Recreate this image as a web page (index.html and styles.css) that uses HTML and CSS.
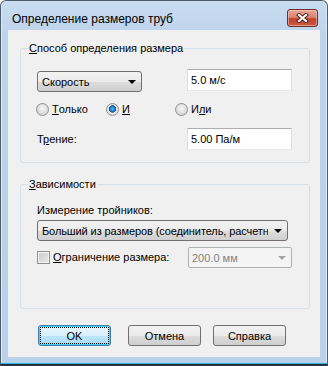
FILE: index.html
```html
<!DOCTYPE html>
<html lang="ru">
<head>
    <meta charset="UTF-8">
    <title>Определение размеров труб</title>
    <link rel="stylesheet" href="styles.css">
</head>
<body>
    <div class="window">
        <div class="titlebar">
            <span class="title">Определение размеров труб</span>
            <button class="close" type="button">
                <svg width="13" height="10" viewBox="0 0 13 10">
                    <path d="M3 2 L10 8 M10 2 L3 8" stroke="#4a2020" stroke-width="4" stroke-linecap="square"/>
                    <path d="M3 2 L10 8 M10 2 L3 8" stroke="#fff" stroke-width="2.2" stroke-linecap="square"/>
                </svg>
            </button>
        </div>

        <div class="client">
            <div class="group group-size">
                <div class="group-title"><u>С</u>пособ определения размера</div>

                <div class="row row-method">
                    <div class="combo combo-method">
                        <span class="combo-text">Скорость</span>
                        <span class="arrow"></span>
                    </div>
                    <div class="field">5.0 м/с</div>
                </div>

                <div class="row radios">
                    <label class="radio radio-only"><span class="dot"></span><u>Т</u>олько</label>
                    <label class="radio radio-and"><span class="dot checked"></span><u>И</u></label>
                    <label class="radio"><span class="dot"></span>И<u>л</u>и</label>
                </div>

                <div class="row row-friction">
                    <span>Т<u>р</u>ение:</span>
                    <div class="field">5.00 Па/м</div>
                </div>
            </div>

            <div class="group group-deps">
                <div class="group-title"><u>З</u>ависимости</div>

                <div class="caption">Измерение тройников:</div>
                <div class="combo combo-tees">
                    <span class="combo-text">Больший из размеров (соединитель, расчетн</span>
                    <span class="arrow"></span>
                </div>

                <div class="row row-limit">
                    <label class="check"><span class="box"></span><u>О</u>граничение размера:</label>
                    <div class="combo combo-disabled">
                        <span class="combo-text">200.0 мм</span>
                        <span class="arrow"></span>
                    </div>
                </div>
            </div>

            <div class="buttons">
                <button class="btn btn-ok" type="button"><span>OK</span></button>
                <button class="btn btn-cancel" type="button">Отмена</button>
                <button class="btn btn-help" type="button">Справка</button>
            </div>
        </div>
    </div>
</body>
</html>
```

FILE: styles.css
```css
* {
    margin: 0;
    padding: 0;
    box-sizing: border-box;
}

body {
    width: 328px;
    height: 366px;
    background: #fff;
    font-family: "Liberation Sans", Arial, sans-serif;
    font-size: 11px;
    color: #000;
}

u {
    text-decoration: underline;
    text-underline-offset: 1px;
}

/* window frame */
.window {
    width: 328px;
    height: 366px;
    display: flex;
    flex-direction: column;
    padding: 0 7px 7px;
    background: linear-gradient(180deg, #c9dcf0 0%, #bcd3eb 40px, #b9d1ea 100%);
    border: 1px solid #4e5d6c;
    border-bottom: 2px solid #2a3440;
    box-shadow: inset 0 -1px 0 #21b3d8, inset 1px 0 0 #dfeaf6, inset -1px 0 0 #dfeaf6;
    border-radius: 6px 6px 0 0;
}

.titlebar {
    height: 29px;
    display: flex;
    align-items: flex-start;
    justify-content: space-between;
    padding-left: 4px;
}

.title {
    margin-top: 11px;
    font-size: 12px;
    line-height: 15px;
    color: #000;
}

.close {
    width: 31px;
    height: 18px;
    margin-top: 8px;
    margin-right: 2px;
    display: flex;
    align-items: center;
    justify-content: center;
    border: 1px solid #6b2f2c;
    border-radius: 3px;
    background: linear-gradient(180deg, #e8a597 0%, #d98572 45%, #c2412c 55%, #c95a40 100%);
    box-shadow: inset 0 0 0 1px rgba(255, 220, 210, 0.5);
}

/* client area */
.client {
    flex: 1;
    display: flex;
    flex-direction: column;
    padding: 18px 10px 0 12px;
    background: #f0f0f0;
}

.group {
    display: flex;
    flex-direction: column;
    border: 1px solid #d5dfe5;
    border-radius: 3px;
    padding: 0 17px 12px 16px;
}

.group-title {
    align-self: flex-start;
    margin: -7px 0 0 -9px;
    padding: 0 1px;
    line-height: 13px;
    background: #f0f0f0;
}

.row {
    display: flex;
    align-items: center;
    justify-content: space-between;
}

.row-method {
    margin-top: 14px;
    align-items: flex-start;
}

.radios {
    margin-top: 11px;
    justify-content: flex-start;
    margin-left: -1px;
}

.row-friction {
    margin-top: 12px;
}

.group-deps {
    margin-top: 21px;
    padding-bottom: 40px;
}

.caption {
    margin-top: 13px;
    line-height: 13px;
}

/* inputs */
.field {
    width: 105px;
    height: 22px;
    padding: 0 3px;
    line-height: 20px;
    background: #fff;
    border: 1px solid #abadb3;
    border-left-color: #dbdfe6;
    border-right-color: #dbdfe6;
    border-bottom-color: #e3e9ef;
}

.combo {
    height: 21px;
    display: flex;
    align-items: center;
    justify-content: space-between;
    padding: 0 5px 0 4px;
    border: 1px solid #707070;
    border-radius: 3px;
    background: linear-gradient(180deg, #f2f2f2 0%, #ebebeb 50%, #dddddd 51%, #cfcfcf 100%);
    white-space: nowrap;
}

.combo-text {
    overflow: hidden;
    min-width: 0;
}

.arrow {
    width: 0;
    height: 0;
    margin-left: 6px;
    border-left: 4px solid transparent;
    border-right: 4px solid transparent;
    border-top: 4px solid #000;
    flex-shrink: 0;
}

.combo-method {
    width: 105px;
    margin-top: 2px;
}

.combo-tees {
    width: 251px;
    margin-top: 3px;
}

.combo-tees .combo-text {
    letter-spacing: -0.1px;
}

.row-limit {
    margin-top: 6px;
}

.combo-disabled {
    width: 104px;
    padding: 0 5px 0 3px;
    border-color: #adb2b5;
    border-radius: 2px;
    background: #f4f4f4;
    color: #838383;
}

.combo-disabled .arrow {
    border-top-color: #a5a5a5;
}

/* radio buttons and check box */
.radio,
.check {
    display: flex;
    align-items: center;
    line-height: 13px;
}

.radio-only {
    width: 70px;
}

.radio-and {
    width: 69px;
}

.dot {
    width: 13px;
    height: 13px;
    margin-right: 3px;
    border-radius: 50%;
    border: 1px solid #8e8f8f;
    background: radial-gradient(circle at 50% 40%, #f4f4f4 0%, #dcdcdc 60%, #c9c9c9 100%);
}

.dot.checked {
    background: radial-gradient(circle at 50% 45%, #5fc3f7 0%, #1e6fb8 32%, #0f4f8f 42%, #e8e8e8 48%, #d4d4d4 100%);
}

.box {
    width: 13px;
    height: 13px;
    margin-right: 3px;
    border: 1px solid #8e8f8f;
    background: linear-gradient(135deg, #cbcbcb 0%, #e8e8e8 100%);
    box-shadow: inset 0 0 0 1px #f4f4f4;
}

/* dialog buttons */
.buttons {
    display: flex;
    margin-top: 16px;
}

.btn {
    width: 73px;
    height: 21px;
    font-family: "Liberation Sans", Arial, sans-serif;
    font-size: 11px;
    color: #000;
    border: 1px solid #707070;
    border-radius: 3px;
    background: linear-gradient(180deg, #f2f2f2 0%, #ebebeb 50%, #dddddd 51%, #cfcfcf 100%);
}

.btn-ok {
    margin-left: 18px;
    padding: 2px;
    border-color: #3c7fb1;
    background: linear-gradient(180deg, #eaf6fd 0%, #d9f0fc 50%, #bee6fd 51%, #a7d9f5 100%);
    box-shadow: inset 0 0 0 1px #48d0f7;
}

.btn-ok span {
    display: flex;
    align-items: center;
    justify-content: center;
    height: 100%;
    outline: 1px dotted #000;
}

.btn-cancel {
    margin-left: 17px;
}

.btn-help {
    margin-left: 12px;
}
```
